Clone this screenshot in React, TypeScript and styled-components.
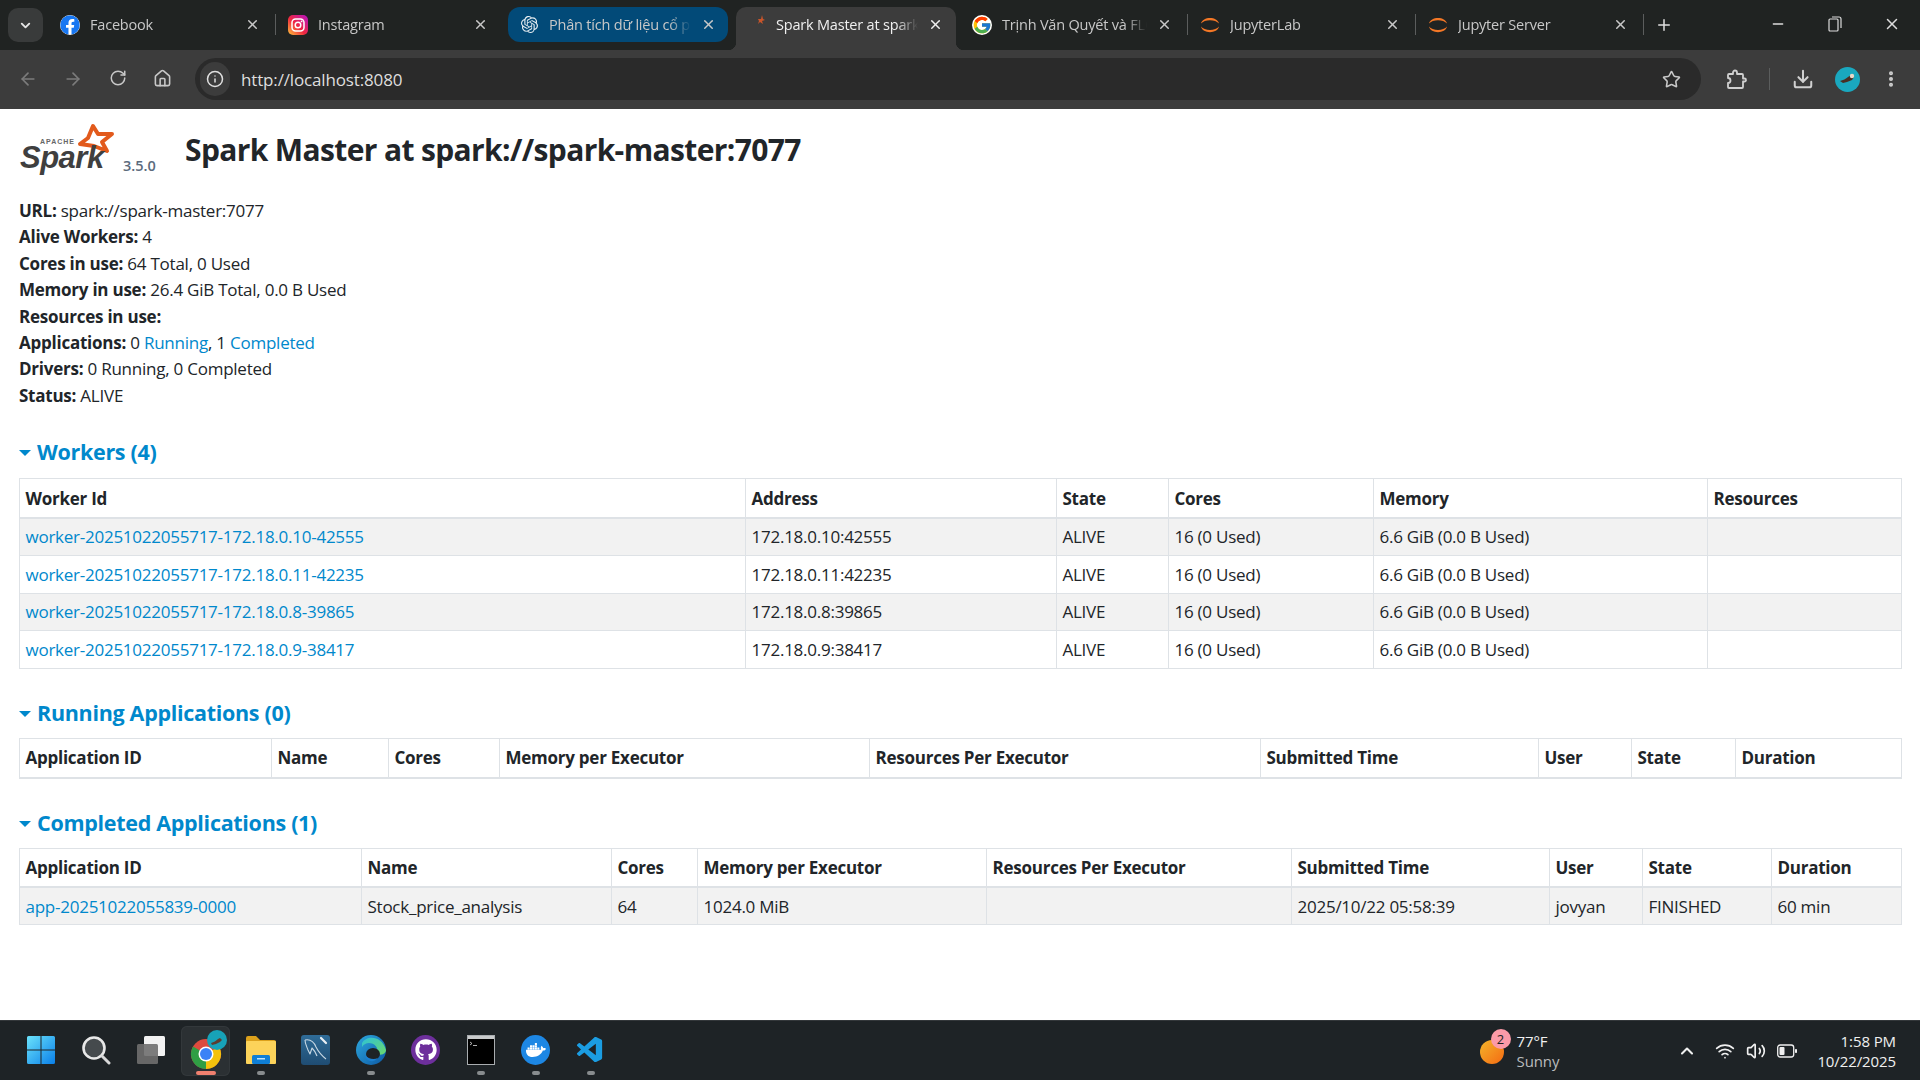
import React from 'react';
import styled, { createGlobalStyle } from 'styled-components';
import {
  ArrowLeft, ArrowRight, ChevronDown, ChevronUp, Download, Home, Info, Minus, MoreVertical,
  Plus, RotateCw, Star, Volume2, Wifi, X,
} from 'lucide-react';
import { FaFacebook, FaDocker, FaGithub } from 'react-icons/fa';
import { FcGoogle } from 'react-icons/fc';
import { SiOpenai } from 'react-icons/si';
import { VscVscode } from 'react-icons/vsc';

const GlobalStyle = createGlobalStyle`
  html, body { margin: 0; padding: 0; height: 100%; overflow: hidden; background: #fff; }
  * { box-sizing: border-box; }
  body { font-family: "Open Sans", "Noto Sans", sans-serif; color: #212529; }
`;

const Screen = styled.div`
  display: flex;
  flex-direction: column;
  width: 1920px;
  height: 1080px;
`;

/* browser tabs */
const TabStrip = styled.div`
  display: flex;
  align-items: flex-end;
  height: 50px;
  flex-shrink: 0;
  background: #202322;
  padding-left: 8px;
`;
const TabListButton = styled.div`
  width: 35px;
  height: 34px;
  margin: 0 5px 8px 0;
  border-radius: 10px;
  background: #393b3b;
  color: #e6e6e6;
  display: flex;
  align-items: center;
  justify-content: center;
`;
const Tab = styled.div<{ $sep?: boolean }>`
  position: relative;
  width: 228px;
  height: 35px;
  margin-bottom: 8px;
  padding: 0 16px 0 12px;
  display: flex;
  align-items: center;
  gap: 10px;
  color: #c8c8c8;
  ${p => p.$sep && `
    &::after {
      content: "";
      position: absolute;
      right: 0;
      top: 7px;
      height: 21px;
      width: 1px;
      background: #5b5d5d;
    }
  `}
`;
const GroupedTab = styled(Tab)`
  width: 220px;
  margin: 0 4px 8px;
  padding: 0 12px 0 11px;
  background: #024a78;
  border-radius: 12px;
`;
const ActiveTab = styled(Tab)`
  width: 220px;
  height: 43px;
  margin: 0 4px;
  padding: 0 13px 8px 10px;
  color: #f0f0f0;
  background: #3c3c3c;
  border-radius: 10px 10px 0 0;
  &::before,
  &::after {
    content: "";
    position: absolute;
    bottom: 0;
    top: auto;
    right: auto;
    width: 8px;
    height: 8px;
    background: transparent;
  }
  &::before {
    left: -8px;
    background: radial-gradient(circle at 0 0, transparent 8px, #3c3c3c 8.5px);
  }
  &::after {
    left: 220px;
    background: radial-gradient(circle at 100% 0, transparent 8px, #3c3c3c 8.5px);
  }
`;
const TabTitle = styled.span`
  flex: 1;
  min-width: 0;
  font-size: 14.5px;
  white-space: nowrap;
  overflow: hidden;
  letter-spacing: -0.2px;
  mask-image: linear-gradient(to right, #000 calc(100% - 22px), transparent);
`;
const TabIcon = styled.span`
  width: 20px;
  height: 20px;
  flex-shrink: 0;
  display: flex;
  align-items: center;
  justify-content: center;
`;
const NewTab = styled.div`
  width: 40px;
  height: 34px;
  margin-bottom: 8px;
  display: flex;
  align-items: center;
  justify-content: center;
  color: #e0e0e0;
`;
const WindowControls = styled.div`
  margin-left: auto;
  display: flex;
  height: 50px;
  align-items: center;
  padding-bottom: 2px;
  color: #dcdcdc;
`;
const WindowButton = styled.div`
  width: 57px;
  display: flex;
  justify-content: center;
`;

/* toolbar */
const Toolbar = styled.div`
  height: 59px;
  flex-shrink: 0;
  background: #3c3c3c;
  display: flex;
  align-items: center;
  padding: 0 0 1px 0;
  color: #c8c8c8;
`;
const NavButton = styled.div<{ $dim?: boolean }>`
  width: 45px;
  display: flex;
  justify-content: center;
  color: ${p => (p.$dim ? '#7b7b7b' : '#c8c8c8')};
`;
const NavGroup = styled.div`
  display: flex;
  width: 195px;
  padding-left: 5px;
`;
const AddressBar = styled.div`
  width: 1506px;
  height: 42px;
  border-radius: 21px;
  background: #2a2a2a;
  display: flex;
  align-items: center;
  padding: 0 20px 0 5px;
`;
const SiteInfo = styled.div`
  width: 30px;
  height: 34px;
  border-radius: 17px;
  background: #3c3c3c;
  color: #e0e0e0;
  display: flex;
  align-items: center;
  justify-content: center;
`;
const UrlText = styled.span`
  flex: 1;
  margin-left: 11px;
  font-size: 17px;
  color: #dedede;
  letter-spacing: -0.15px;
`;
const ToolbarRight = styled.div`
  flex: 1;
  display: flex;
  align-items: center;
  padding-left: 25px;
  color: #d0d0d0;
`;
const ToolbarDivider = styled.div`
  width: 1px;
  height: 22px;
  margin: 0 22px 0 22px;
  background: #5b5d5d;
`;
const AvatarSlot = styled.div`
  display: flex;
  margin: 0 21px 0 21px;
`;

/* spark page */
const Page = styled.main`
  flex: 1;
  min-height: 0;
  background: #fff;
  padding: 0 19px;
  overflow: hidden;
`;
const TitleRow = styled.div`
  display: flex;
  align-items: flex-start;
  height: 89px;
  padding-top: 14px;
`;
const LogoBox = styled.div`
  position: relative;
  width: 166px;
  height: 60px;
  flex-shrink: 0;
`;
const Version = styled.span`
  position: absolute;
  left: 104px;
  top: 33px;
  font-size: 14.5px;
  font-weight: 600;
  color: #5b6b7d;
`;
const PageTitle = styled.h1`
  margin: 0;
  padding-top: 5px;
  font-size: 30px;
  line-height: 44px;
  font-weight: 700;
  letter-spacing: -0.63px;
  color: #212529;
  white-space: nowrap;
`;
const InfoList = styled.ul`
  list-style: none;
  margin: 0;
  padding: 0;
  font-size: 17px;
  line-height: 26.4px;
  letter-spacing: -0.24px;
`;
const Label = styled.strong`
  font-weight: 700;
`;
const Link = styled.a`
  color: #0088cc;
  text-decoration: none;
`;
const Section = styled.section<{ $top: number }>`
  padding-top: ${p => p.$top}px;
`;
const SectionTitle = styled.h4<{ $gap: number }>`
  display: flex;
  align-items: center;
  height: 30px;
  margin: 0 0 ${p => p.$gap}px;
  font-size: 21.5px;
  font-weight: 700;
  letter-spacing: -0.3px;
  color: #0088cc;
`;
const Caret = styled.span`
  width: 0;
  height: 0;
  margin: 3px 6px 0 0;
  border-left: 6px solid transparent;
  border-right: 6px solid transparent;
  border-top: 6px solid #0088cc;
`;
const Table = styled.table`
  width: 1882px;
  table-layout: fixed;
  border-collapse: collapse;
  font-size: 17px;
  letter-spacing: -0.25px;
`;
const Th = styled.th`
  height: 39px;
  padding: 0 5.5px;
  text-align: left;
  font-weight: 700;
  white-space: nowrap;
  border: 1px solid #dee2e6;
  border-bottom-width: 2px;
`;
const Row = styled.tr<{ $odd: boolean }>`
  background: ${p => (p.$odd ? '#f2f2f2' : '#fff')};
`;
const Td = styled.td`
  height: 37.7px;
  padding: 0 5.5px;
  white-space: nowrap;
  border: 1px solid #dee2e6;
`;

/* windows taskbar */
const Taskbar = styled.footer`
  height: 60px;
  flex-shrink: 0;
  background: #1e2326;
  border-top: 1px solid #33373a;
  display: flex;
  align-items: center;
  padding-left: 13px;
  color: #f0f0f0;
`;
const TaskItem = styled.div<{ $active?: boolean }>`
  position: relative;
  width: 55px;
  height: 50px;
  margin-top: 1px;
  display: flex;
  align-items: center;
  justify-content: center;
  padding-bottom: 2px;
  border-radius: 6px;
  ${p => p.$active && 'background: #2b3033; width: 49px; margin: 1px 3px 0; box-shadow: inset 0 0 0 1px #33383b;'}
`;
const RunDot = styled.span<{ $wide?: boolean }>`
  position: absolute;
  bottom: 1px;
  left: 50%;
  transform: translateX(-50%);
  height: 4px;
  width: ${p => (p.$wide ? '20px' : '8px')};
  border-radius: 2px;
  background: ${p => (p.$wide ? '#f0806f' : '#888c8e')};
`;
const IconTile = styled.span<{ $bg: string; $round?: boolean }>`
  width: 29px;
  height: 30px;
  display: flex;
  align-items: center;
  justify-content: center;
  background: ${p => p.$bg};
  border-radius: ${p => (p.$round ? '50%' : '3px')};
  color: #fff;
`;
const Tray = styled.div`
  margin-left: auto;
  display: flex;
  align-items: center;
  height: 100%;
`;
const Weather = styled.div`
  position: relative;
  display: flex;
  align-items: center;
  gap: 13px;
  margin-right: 118px;
`;
const Sun = styled.span`
  width: 24px;
  height: 24px;
  margin-top: 2px;
  border-radius: 50%;
  background: linear-gradient(135deg, #f3b52b, #f56a12);
`;
const Badge = styled.span`
  position: absolute;
  left: 11px;
  top: -2px;
  width: 20px;
  height: 20px;
  border-radius: 50%;
  background: #fb9aa8;
  color: #222;
  font-size: 13px;
  display: flex;
  align-items: center;
  justify-content: center;
`;
const TrayText = styled.div<{ $right?: boolean }>`
  font-size: 15px;
  line-height: 20px;
  letter-spacing: -0.1px;
  text-align: ${p => (p.$right ? 'right' : 'left')};
`;
const Muted = styled.div`
  color: #b9bcbe;
`;
const TrayIcons = styled.div`
  display: flex;
  align-items: center;
  gap: 11px;
  margin-right: 20px;
`;
const TrayChevron = styled.span`
  display: flex;
  margin-right: 7px;
`;
const Clock = styled.div`
  margin-right: 24px;
`;

const SparkLogo = () => (
  <svg width="100" height="56" viewBox="0 0 100 56">
    <polygon
      points="74,3 79,11 93,11 83,19 88,28 75,23 61,21 69,15"
      fill="none"
      stroke="#e25a1c"
      strokeWidth="4"
      strokeLinejoin="round"
    />
    <text x="21" y="21" fontFamily="Liberation Sans, sans-serif" fontSize="7" fontWeight="700" letterSpacing="1" fill="#666">APACHE</text>
    <text x="1" y="45" fontFamily="Liberation Sans, sans-serif" fontSize="31" fontWeight="700" fontStyle="italic" letterSpacing="-0.5" fill="#3f3f3f">Spark</text>
  </svg>
);

const InstagramIcon = () => (
  <svg width="20" height="20" viewBox="0 0 20 20">
    <defs>
      <linearGradient id="ig" x1="0" y1="1" x2="1" y2="0">
        <stop offset="0" stopColor="#fdc43a" />
        <stop offset="0.45" stopColor="#f0273f" />
        <stop offset="1" stopColor="#b513c6" />
      </linearGradient>
    </defs>
    <rect width="20" height="20" rx="5" fill="url(#ig)" />
    <rect x="4" y="4" width="12" height="12" rx="3.5" fill="none" stroke="#fff" strokeWidth="1.5" />
    <circle cx="10" cy="10" r="2.8" fill="none" stroke="#fff" strokeWidth="1.5" />
    <circle cx="13.6" cy="6.4" r="0.9" fill="#fff" />
  </svg>
);

const JupyterIcon = () => (
  <svg width="20" height="20" viewBox="0 0 20 20">
    <path d="M1 8.500C2.500 1 17.500 1 19 8.500C15.500 4 4.500 4 1 8.500Z" fill="#f37726" />
    <path d="M1 11.500C2.500 19 17.500 19 19 11.500C15.500 16 4.500 16 1 11.500Z" fill="#f37726" />
  </svg>
);

const SparkFavicon = () => (
  <svg width="20" height="20" viewBox="0 0 20 20">
    <path d="M16 0l1 4 2 1-3 1 1 3-3-2-2 2 1-3-1-2 3 0z" fill="#c9552a" />
  </svg>
);

const PuzzleIcon = () => (
  <svg width="21" height="21" viewBox="0 0 21 21" fill="none" stroke="currentColor" strokeWidth="1.800" strokeLinejoin="round">
    <path d="M3 5h4V3.500a2 2 0 0 1 4 0V5h5a1 1 0 0 1 1 1v3.500h1.500a1.500 1.500 0 0 1 0 3H17V18a1 1 0 0 1-1 1H3a1 1 0 0 1-1-1v-4c1.500 0 2.500-1 2.500-2.500S3.500 9 2 9V6a1 1 0 0 1 1-1z" />
  </svg>
);

const AvatarIcon = () => (
  <svg width="25" height="25" viewBox="0 0 25 25">
    <circle cx="12.500" cy="12.500" r="12.500" fill="#1aa8bf" />
    <path d="M5 14c3-1 6-2 8-4l3-2 3 2-2 3-5 2-4 1z" fill="#4a2f24" />
    <circle cx="17" cy="9" r="2.200" fill="#e8d8c8" />
  </svg>
);

const WindowsLogo = () => (
  <svg width="30" height="30" viewBox="0 0 30 30">
    <defs>
      <linearGradient id="win" x1="0" y1="0" x2="1" y2="1">
        <stop offset="0" stopColor="#6be3fb" />
        <stop offset="1" stopColor="#0a7fe8" />
      </linearGradient>
    </defs>
    <path d="M1 2.5A1.5 1.5 0 0 1 2.5 1H14.500V14.500H1ZM15.500 1H27.500A1.500 1.500 0 0 1 29 2.500V14.500H15.500ZM1 15.500H14.500V29H2.500A1.500 1.500 0 0 1 1 27.500ZM15.500 15.500H29V27.500A1.500 1.500 0 0 1 27.500 29H15.500Z" fill="url(#win)" />
  </svg>
);

const SearchIcon = () => (
  <svg width="30" height="30" viewBox="0 0 30 30">
    <circle cx="13" cy="13" r="10.5" fill="#454a4d" stroke="#e8e8e8" strokeWidth="2.600" />
    <path d="M21 21L28 28" stroke="#d8d8d8" strokeWidth="3" strokeLinecap="round" />
  </svg>
);

const TaskViewIcon = () => (
  <svg width="30" height="30" viewBox="0 0 30 30">
    <rect x="8" y="1" width="21" height="20" rx="1.500" fill="#f2f2f2" />
    <rect x="1" y="9" width="21" height="20" rx="1.500" fill="#6f6f6f" fillOpacity="0.9" />
  </svg>
);

const ChromeIcon = () => (
  <svg width="44" height="42" viewBox="0 0 44 42">
    <circle cx="22" cy="25" r="15" fill="#dd4b3e" />
    <path d="M22 25L35 17.500A15 15 0 0 1 22 40Z" fill="#f4c20d" />
    <path d="M22 25L22 40A15 15 0 0 1 9 17.500Z" fill="#2f9e44" />
    <circle cx="22" cy="25" r="7.500" fill="#fff" />
    <circle cx="22" cy="25" r="6" fill="#3b82f6" />
    <circle cx="33" cy="11" r="10" fill="#17a2b8" />
    <path d="M27 14c3-1 5-2 7-4l2-1 2 2-2 2-4 2-4 1z" fill="#5c3d2e" />
  </svg>
);

const FolderIcon = () => (
  <svg width="30" height="28" viewBox="0 0 30 28">
    <path d="M0 2a2 2 0 0 1 2-2h8l4 4h14a2 2 0 0 1 2 2v3H0Z" fill="#dca11c" />
    <rect y="5" width="30" height="23" rx="1" fill="#fcd35a" />
    <rect x="6" y="19" width="18" height="9" rx="1.500" fill="#0f7fd6" />
    <rect x="11" y="22" width="8" height="1.500" fill="#bfe3fb" />
  </svg>
);

const MysqlIcon = () => (
  <svg width="29" height="30" viewBox="0 0 29 30">
    <defs>
      <linearGradient id="my" x1="0" y1="0" x2="0" y2="1">
        <stop offset="0" stopColor="#2f6c98" />
        <stop offset="1" stopColor="#1f4c72" />
      </linearGradient>
    </defs>
    <rect width="29" height="30" rx="3" fill="url(#my)" />
    <path d="M4 5c5-1 9 2 11 7 2 4 5 8 10 12M4 5c0 4 2 7 3 10l2 4 2-6c2 2 4 5 5 8" fill="none" stroke="#c8d8e4" strokeWidth="1.100" strokeLinejoin="round" />
    <path d="M20 3l5 5" stroke="#e8eef3" strokeWidth="2.200" strokeLinecap="round" />
  </svg>
);

const EdgeIcon = () => (
  <svg width="30" height="30" viewBox="0 0 30 30">
    <defs>
      <linearGradient id="edge" x1="0" y1="0" x2="1" y2="1">
        <stop offset="0" stopColor="#2ea8dd" />
        <stop offset="1" stopColor="#0c59a4" />
      </linearGradient>
      <linearGradient id="edge2" x1="0" y1="0" x2="1" y2="1">
        <stop offset="0" stopColor="#2ec2d8" />
        <stop offset="1" stopColor="#6cd96a" />
      </linearGradient>
    </defs>
    <circle cx="15" cy="15" r="15" fill="url(#edge)" />
    <path d="M6 8C10 0 26 0 30 15C30 20 22 21 20 18C24 13 18 8 13 8C10 8 8 9 6 12Z" fill="url(#edge2)" />
    <ellipse cx="17" cy="19" rx="7" ry="6" fill="#1e2326" />
    <path d="M22 23C18 28 10 27 9 20C12 24 18 25 22 23Z" fill="#1c7fd0" />
  </svg>
);

const TerminalIcon = () => (
  <svg width="28" height="30" viewBox="0 0 28 30">
    <rect x="0.500" y="0.500" width="27" height="29" fill="#000" stroke="#a9adb0" />
    <rect x="1" y="1" width="26" height="3" fill="#c9cbcc" />
    <path d="M3 7l2 1.500-2 1.500M6 10.500h4" stroke="#ddd" strokeWidth="0.800" fill="none" />
  </svg>
);

const BatteryIcon = () => (
  <svg width="20" height="14" viewBox="0 0 20 14">
    <rect x="0.700" y="1" width="16" height="12" rx="2.500" fill="none" stroke="#f0f0f0" strokeWidth="1.300" />
    <rect x="2.500" y="3" width="5" height="8" rx="1" fill="#f0f0f0" />
    <rect x="18" y="5" width="2" height="4" rx="0.800" fill="#f0f0f0" />
  </svg>
);

const tabs = [
  { title: 'Facebook', icon: <FaFacebook size={20} color="#1877f2" style={{ background: '#fff', borderRadius: '50%' }} />, sep: true },
  { title: 'Instagram', icon: <InstagramIcon /> },
];
const laterTabs = [
  { title: 'Trịnh Văn Quyết và FLC - Google Search', icon: <FcGoogle size={20} style={{ background: '#fff', borderRadius: '50%' }} /> },
  { title: 'JupyterLab', icon: <JupyterIcon /> },
  { title: 'Jupyter Server', icon: <JupyterIcon /> },
];

const workers = [
  ['worker-20251022055717-172.18.0.10-42555', '172.18.0.10:42555'],
  ['worker-20251022055717-172.18.0.11-42235', '172.18.0.11:42235'],
  ['worker-20251022055717-172.18.0.8-39865', '172.18.0.8:39865'],
  ['worker-20251022055717-172.18.0.9-38417', '172.18.0.9:38417'],
];

const workerCols = [726, 311, 112, 205, 334, 194];
const runningCols = [252, 117, 111, 370, 391, 278, 93, 104, 166];
const completedCols = [342, 250, 86, 289, 305, 258, 93, 129, 130];

const Columns = ({ widths }: { widths: number[] }) => (
  <colgroup>
    {widths.map((w, i) => <col key={i} width={w} />)}
  </colgroup>
);

const HeadRow = ({ names }: { names: string[] }) => (
  <thead>
    <tr>{names.map(n => <Th key={n}>{n}</Th>)}</tr>
  </thead>
);

const Heading = ({ children, gap = 11 }: { children: React.ReactNode; gap?: number }) => (
  <SectionTitle $gap={gap}><Caret />{children}</SectionTitle>
);

const appCols = ['Application ID', 'Name', 'Cores', 'Memory per Executor', 'Resources Per Executor', 'Submitted Time', 'User', 'State', 'Duration'];

export default function App() {
  return (
    <Screen>
      <GlobalStyle />
      <TabStrip>
        <TabListButton><ChevronDown size={15} strokeWidth={3} /></TabListButton>
        {tabs.map(t => (
          <Tab key={t.title} $sep={t.sep}>
            <TabIcon>{t.icon}</TabIcon>
            <TabTitle>{t.title}</TabTitle>
            <X size={15} strokeWidth={2.4} />
          </Tab>
        ))}
        <GroupedTab>
          <TabIcon><SiOpenai size={17} color="#e8eef2" /></TabIcon>
          <TabTitle>Phân tích dữ liệu cổ phiếu</TabTitle>
          <X size={15} strokeWidth={2.4} />
        </GroupedTab>
        <ActiveTab>
          <TabIcon><SparkFavicon /></TabIcon>
          <TabTitle>Spark Master at spark://spark-master</TabTitle>
          <X size={15} strokeWidth={2.4} />
        </ActiveTab>
        {laterTabs.map(t => (
          <Tab key={t.title} $sep>
            <TabIcon>{t.icon}</TabIcon>
            <TabTitle>{t.title}</TabTitle>
            <X size={15} strokeWidth={2.4} />
          </Tab>
        ))}
        <NewTab><Plus size={18} /></NewTab>
        <WindowControls>
          <WindowButton><Minus size={16} /></WindowButton>
          <WindowButton>
            <svg width="14" height="16" viewBox="0 0 14 16" fill="none" stroke="currentColor" strokeWidth="1.200">
              <rect x="1" y="3" width="9" height="12" rx="1" />
              <path d="M4 1h7a2 2 0 0 1 2 2v9" />
            </svg>
          </WindowButton>
          <WindowButton><X size={18} /></WindowButton>
        </WindowControls>
      </TabStrip>

      <Toolbar>
        <NavGroup>
          <NavButton $dim><ArrowLeft size={20} /></NavButton>
          <NavButton $dim><ArrowRight size={20} /></NavButton>
          <NavButton><RotateCw size={18} /></NavButton>
          <NavButton><Home size={19} /></NavButton>
        </NavGroup>
        <AddressBar>
          <SiteInfo><Info size={18} /></SiteInfo>
          <UrlText>http://localhost:8080</UrlText>
          <Star size={19} />
        </AddressBar>
        <ToolbarRight>
          <PuzzleIcon />
          <ToolbarDivider />
          <Download size={22} strokeWidth={2.2} />
          <AvatarSlot><AvatarIcon /></AvatarSlot>
          <MoreVertical size={20} strokeWidth={2.800} />
        </ToolbarRight>
      </Toolbar>

      <Page>
        <TitleRow>
          <LogoBox>
            <SparkLogo />
            <Version>3.5.0</Version>
          </LogoBox>
          <PageTitle>Spark Master at spark://spark-master:7077</PageTitle>
        </TitleRow>
        <InfoList>
          <li><Label>URL:</Label> spark://spark-master:7077</li>
          <li><Label>Alive Workers:</Label> 4</li>
          <li><Label>Cores in use:</Label> 64 Total, 0 Used</li>
          <li><Label>Memory in use:</Label> 26.4 GiB Total, 0.0 B Used</li>
          <li><Label>Resources in use:</Label></li>
          <li><Label>Applications:</Label> 0 <Link href="#running">Running</Link>, 1 <Link href="#completed">Completed</Link></li>
          <li><Label>Drivers:</Label> 0 Running, 0 Completed</li>
          <li><Label>Status:</Label> ALIVE</li>
        </InfoList>

        <Section $top={27}>
          <Heading gap={12}>Workers (4)</Heading>
          <Table>
            <Columns widths={workerCols} />
            <HeadRow names={['Worker Id', 'Address', 'State', 'Cores', 'Memory', 'Resources']} />
            <tbody>
              {workers.map(([id, address], i) => (
                <Row key={id} $odd={i % 2 === 0}>
                  <Td><Link href="#worker">{id}</Link></Td>
                  <Td>{address}</Td>
                  <Td>ALIVE</Td>
                  <Td>16 (0 Used)</Td>
                  <Td>6.6 GiB (0.0 B Used)</Td>
                  <Td />
                </Row>
              ))}
            </tbody>
          </Table>
        </Section>

        <Section $top={28}>
          <Heading>Running Applications (0)</Heading>
          <Table>
            <Columns widths={runningCols} />
            <HeadRow names={appCols} />
          </Table>
        </Section>

        <Section $top={29}>
          <Heading gap={10}>Completed Applications (1)</Heading>
          <Table>
            <Columns widths={completedCols} />
            <HeadRow names={appCols} />
            <tbody>
              <Row $odd>
                <Td><Link href="#app">app-20251022055839-0000</Link></Td>
                <Td>Stock_price_analysis</Td>
                <Td>64</Td>
                <Td>1024.0 MiB</Td>
                <Td />
                <Td>2025/10/22 05:58:39</Td>
                <Td>jovyan</Td>
                <Td>FINISHED</Td>
                <Td>60 min</Td>
              </Row>
            </tbody>
          </Table>
        </Section>
      </Page>

      <Taskbar>
        <TaskItem><WindowsLogo /></TaskItem>
        <TaskItem><SearchIcon /></TaskItem>
        <TaskItem><TaskViewIcon /></TaskItem>
        <TaskItem $active><ChromeIcon /><RunDot $wide /></TaskItem>
        <TaskItem><FolderIcon /><RunDot /></TaskItem>
        <TaskItem><MysqlIcon /></TaskItem>
        <TaskItem><EdgeIcon /><RunDot /></TaskItem>
        <TaskItem><IconTile $bg="#6d2f9c" $round><FaGithub size={22} /></IconTile></TaskItem>
        <TaskItem><TerminalIcon /><RunDot /></TaskItem>
        <TaskItem><IconTile $bg="#1d87e4" $round><FaDocker size={20} /></IconTile><RunDot /></TaskItem>
        <TaskItem><VscVscode size={31} color="#1b9de2" /><RunDot /></TaskItem>
        <Tray>
          <Weather>
            <Sun />
            <Badge>2</Badge>
            <TrayText>
              <div>77°F</div>
              <Muted>Sunny</Muted>
            </TrayText>
          </Weather>
          <TrayIcons>
            <TrayChevron><ChevronUp size={20} strokeWidth={2.5} /></TrayChevron>
            <Wifi size={20} />
            <Volume2 size={20} />
            <BatteryIcon />
          </TrayIcons>
          <Clock>
            <TrayText $right>
              <div>1:58 PM</div>
              <div>10/22/2025</div>
            </TrayText>
          </Clock>
        </Tray>
      </Taskbar>
    </Screen>
  );
}
